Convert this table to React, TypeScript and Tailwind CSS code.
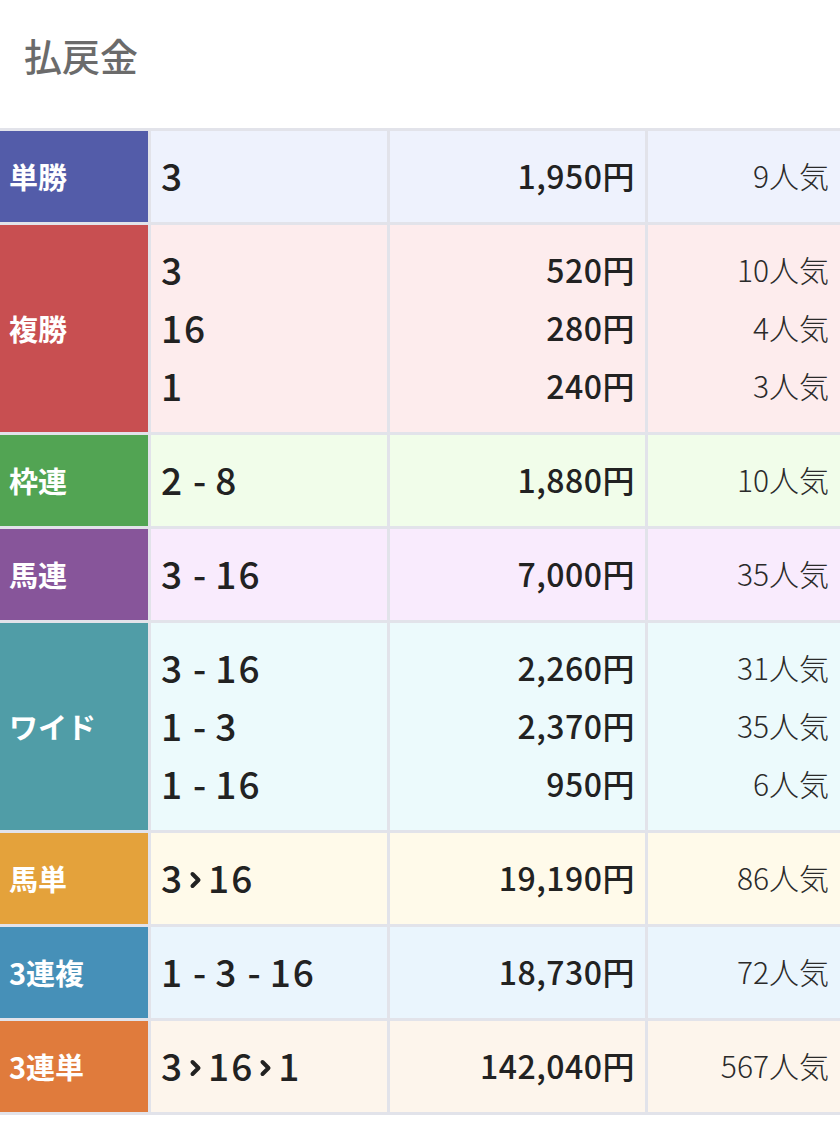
import React from 'react'

type Line = { combo: (number | '-' | '>')[]; pay: string; pop: string }
type Row = { label: string; labelBg: string; cellBg: string; lines: Line[] }

const ROWS: Row[] = [
  { label: '単勝', labelBg: 'bg-[#535ca9]', cellBg: 'bg-[#eef2fd]', lines: [
    { combo: [3], pay: '1,950円', pop: '9人気' },
  ] },
  { label: '複勝', labelBg: 'bg-[#c84f51]', cellBg: 'bg-[#fdeced]', lines: [
    { combo: [3], pay: '520円', pop: '10人気' },
    { combo: [16], pay: '280円', pop: '4人気' },
    { combo: [1], pay: '240円', pop: '3人気' },
  ] },
  { label: '枠連', labelBg: 'bg-[#52a453]', cellBg: 'bg-[#f1fdea]', lines: [
    { combo: [2, '-', 8], pay: '1,880円', pop: '10人気' },
  ] },
  { label: '馬連', labelBg: 'bg-[#87559a]', cellBg: 'bg-[#f9ebfd]', lines: [
    { combo: [3, '-', 16], pay: '7,000円', pop: '35人気' },
  ] },
  { label: 'ワイド', labelBg: 'bg-[#509da7]', cellBg: 'bg-[#ecfafc]', lines: [
    { combo: [3, '-', 16], pay: '2,260円', pop: '31人気' },
    { combo: [1, '-', 3], pay: '2,370円', pop: '35人気' },
    { combo: [1, '-', 16], pay: '950円', pop: '6人気' },
  ] },
  { label: '馬単', labelBg: 'bg-[#e4a23b]', cellBg: 'bg-[#fffaea]', lines: [
    { combo: [3, '>', 16], pay: '19,190円', pop: '86人気' },
  ] },
  { label: '3連複', labelBg: 'bg-[#4690b8]', cellBg: 'bg-[#eaf5fd]', lines: [
    { combo: [1, '-', 3, '-', 16], pay: '18,730円', pop: '72人気' },
  ] },
  { label: '3連単', labelBg: 'bg-[#e07b3c]', cellBg: 'bg-[#fdf5ec]', lines: [
    { combo: [3, '>', 16, '>', 1], pay: '142,040円', pop: '567人気' },
  ] },
]

// small bold chevron used between finishing order numbers
const Arrow = () => (
  <svg width="14" height="20" viewBox="0 0 14 20" className="mx-[5px] mt-[6px]">
    <path d="M3.5 4 L9.5 10 L3.5 16" fill="none" stroke="#222" strokeWidth="4" strokeLinecap="round" strokeLinejoin="round" />
  </svg>
)

const Combo = ({ combo }: { combo: Line['combo'] }) => (
  <div className="flex items-center">
    {combo.map((c, i) =>
      c === '-' ? <span key={i} className="mx-[9px]">-</span>
      : c === '>' ? <Arrow key={i} />
      : <span key={i} className="tracking-[2px]">{c}</span>
    )}
  </div>
)

export default function App() {
  return (
    <div className="w-[840px] bg-white text-[#222]" style={{ fontFamily: '"Noto Sans CJK JP", "Noto Sans", sans-serif' }}>
      <div className="h-[128px] pl-[24px] pt-[31px] text-[38px] leading-[48px] font-medium text-[#6b6b6b]">払戻金</div>

      <div className="grid grid-cols-[148px_236px_255px_1fr] gap-[3px] bg-[#e2e3ea] py-[3px]">
        {ROWS.map(r => (
          <React.Fragment key={r.label}>
            <div className={`${r.labelBg} flex items-center pl-[9px] text-[29px] font-bold text-white`}>{r.label}</div>
            <div className={`${r.cellBg} pt-[15px] pb-[18px] pl-[10px] text-[37px] leading-[58px] font-medium`}>
              {r.lines.map((l, i) => <Combo key={i} combo={l.combo} />)}
            </div>
            <div className={`${r.cellBg} pt-[15px] pb-[18px] pr-[10px] text-right text-[32px] leading-[58px] font-medium tracking-[0.5px]`}>
              {r.lines.map((l, i) => <div key={i}>{l.pay}</div>)}
            </div>
            <div className={`${r.cellBg} pt-[15px] pb-[18px] pr-[11px] text-right text-[30px] leading-[58px] font-light text-[#2a2a2a]`}>
              {r.lines.map((l, i) => <div key={i}>{l.pop}</div>)}
            </div>
          </React.Fragment>
        ))}
      </div>
      <div className="h-[22px]" />
    </div>
  )
}
